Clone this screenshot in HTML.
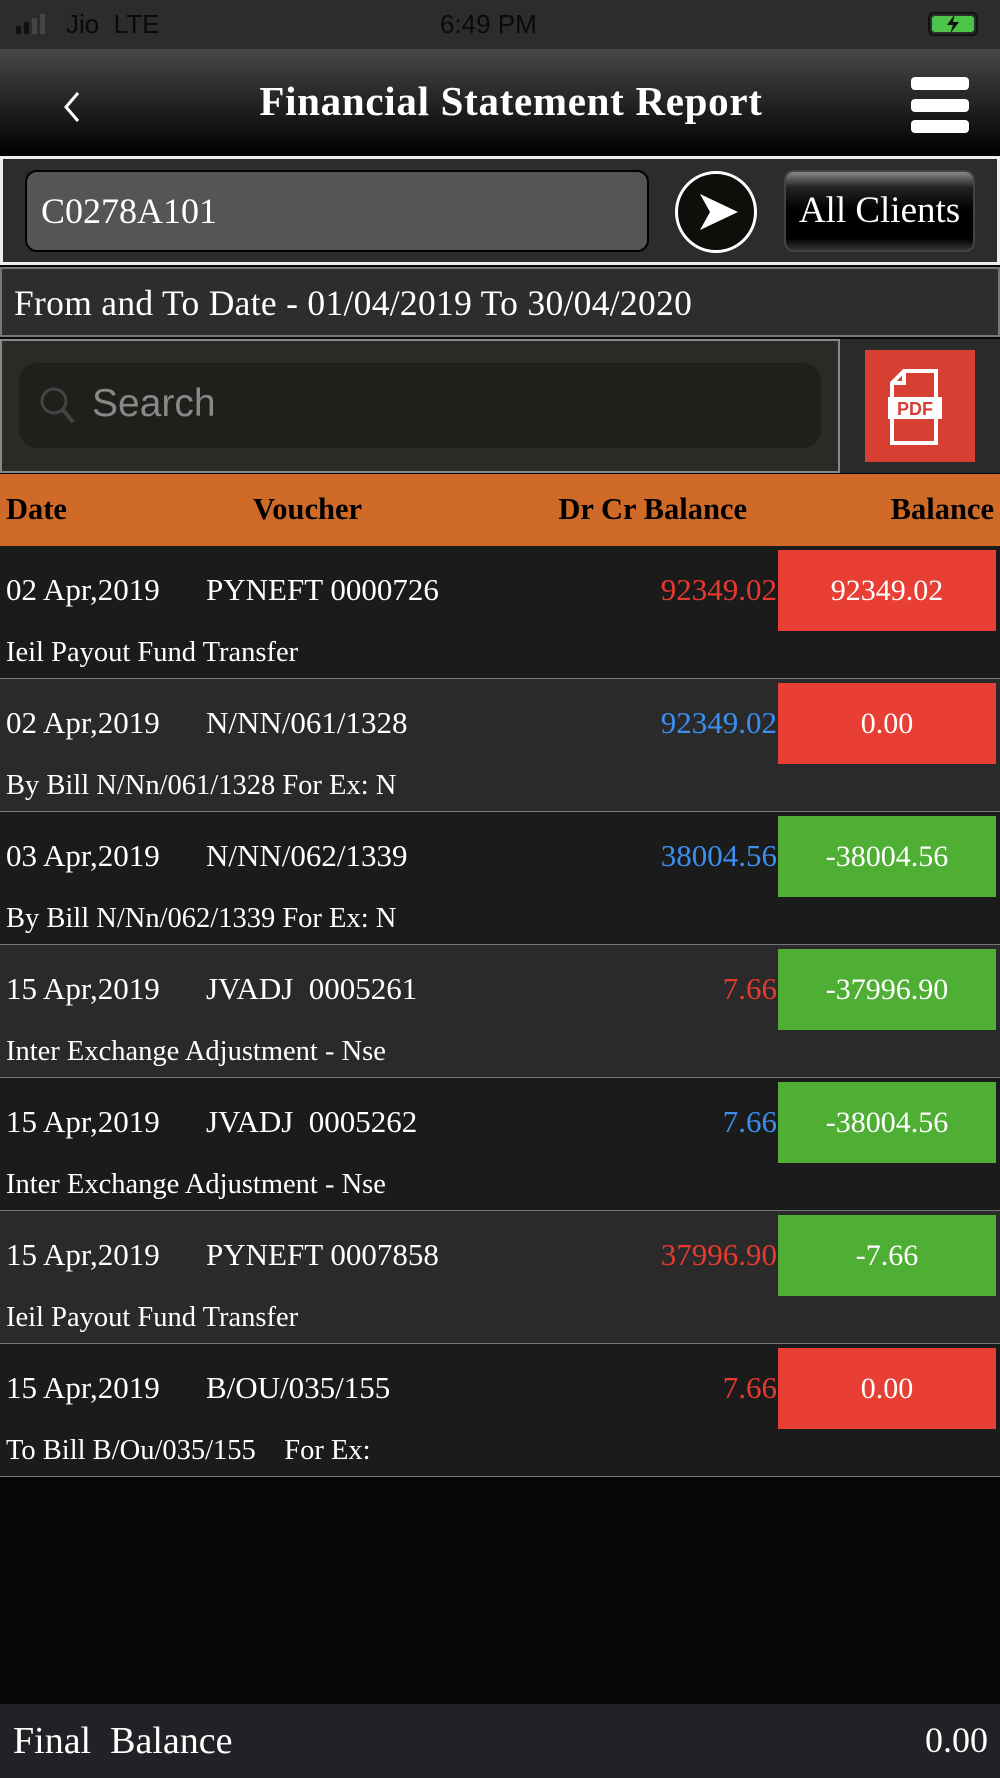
<!DOCTYPE html><html><head><style>
*{margin:0;padding:0;box-sizing:border-box}
body{width:1000px;height:1778px;background:#070707;font-family:"Liberation Serif",serif;color:#fff;position:relative;overflow:hidden}
.a{position:absolute}
.row{position:absolute;left:0;width:1000px;height:133px;border-bottom:1px solid #777}
.row .d{position:absolute;left:6px;top:26px;font-size:31px}
.row .v{position:absolute;left:206px;top:26px;font-size:31px;white-space:pre}
.row .c{position:absolute;right:223px;top:26px;font-size:31px}
.row .b{position:absolute;left:778px;top:4px;width:218px;height:81px;font-size:30px;text-align:center;line-height:81px}
.row .s{position:absolute;left:6px;top:91px;font-size:28.5px;white-space:pre}
.R{background:#e83e33}.G{background:#4faf35}
</style></head><body>
<div class="a" style="left:0;top:0;width:1000px;height:49px;background:#2c2c2c"></div>
<div class="a" style="left:16px;top:14px;display:flex;align-items:flex-end;gap:3px">
<div style="width:5px;height:8px;background:#111"></div><div style="width:5px;height:12px;background:#111"></div><div style="width:5px;height:16px;background:#444"></div><div style="width:5px;height:20px;background:#444"></div></div>
<div class="a" style="left:66px;top:9px;font:26px 'Liberation Sans',sans-serif;color:#0a0a0a">Jio&nbsp; LTE</div>
<div class="a" style="left:440px;top:9px;font:26px 'Liberation Sans',sans-serif;color:#0a0a0a">6:49 PM</div>
<div class="a" style="left:928px;top:12px;width:50px;height:24px;border:2px solid #111;border-radius:6px;padding:2px"><div style="width:100%;height:100%;background:#4cc44a;border-radius:3px"></div></div>
<svg class="a" style="left:942px;top:13px" width="22" height="22"><path d="M13 1 L5 12 H11 L8 21 L17 9 H11 Z" fill="#111"/></svg>
<div class="a" style="left:0;top:49px;width:1000px;height:107px;background:linear-gradient(#474747,#000)"></div>
<svg class="a" style="left:60px;top:90px" width="24" height="34"><path d="M18 3 L6 17 L18 31" stroke="#fff" stroke-width="3" fill="none"/></svg>
<div class="a" style="left:0;width:1022px;top:77px;text-align:center;font-weight:bold;font-size:41px;letter-spacing:0.7px">Financial Statement Report</div>
<div class="a" style="left:911px;top:77px;width:58px;height:13px;background:#fff;border-radius:4px"></div>
<div class="a" style="left:911px;top:99px;width:58px;height:13px;background:#fff;border-radius:4px"></div>
<div class="a" style="left:911px;top:120px;width:58px;height:13px;background:#fff;border-radius:4px"></div>
<div class="a" style="left:0;top:156px;width:1000px;height:3px;background:#eee"></div>
<div class="a" style="left:0;top:159px;width:1000px;height:106px;background:#2c2c2c;border:3px solid #eee;border-top:0"></div>
<div class="a" style="left:25px;top:170px;width:624px;height:82px;background:#555;border:2px solid #000;border-radius:12px;font-size:36px;padding:18px 14px">C0278A101</div>
<div class="a" style="left:675px;top:171px;width:82px;height:82px;border-radius:50%;background:#0e0e0a;border:3px solid #fff"></div>
<svg class="a" style="left:698px;top:192px" width="42" height="40"><path d="M2 2 L40 20 L2 38 L12 20 Z" fill="#fff"/></svg>
<div class="a" style="left:784px;top:170px;width:191px;height:82px;border-radius:10px;border:2px solid #444;background:linear-gradient(#888 0%,#222 20%,#000 50%,#000 85%,#333);font-size:37px;text-align:center;line-height:78px;white-space:nowrap">All Clients</div>
<div class="a" style="left:0;top:267px;width:1000px;height:70px;background:#2d2d2d;border:2px solid #777"></div>
<div class="a" style="left:14px;top:282px;font-size:35.5px;letter-spacing:0.3px">From and To Date - 01/04/2019 To 30/04/2020</div>
<div class="a" style="left:0;top:339px;width:840px;height:134px;background:#2a2a26;border:2px solid #888"></div>
<div class="a" style="left:840px;top:339px;width:160px;height:134px;background:#2a2a2a"></div>
<div class="a" style="left:19px;top:363px;width:802px;height:85px;background:#1f1f1c;border-radius:18px"></div>
<svg class="a" style="left:38px;top:385px" width="40" height="42"><circle cx="16" cy="16" r="12" stroke="#444" stroke-width="3" fill="none"/><path d="M25 25 L35 37" stroke="#444" stroke-width="4"/></svg>
<div class="a" style="left:92px;top:382px;font:39px 'Liberation Sans',sans-serif;color:#888">Search</div>
<div class="a" style="left:865px;top:350px;width:110px;height:112px;background:#d63f31"></div>
<svg class="a" style="left:888px;top:367px" width="64" height="80"><path d="M16 4 H48 V76 H4 V16 Z M4 16 H16 V4" stroke="#fff" stroke-width="4" fill="none"/><rect x="0" y="30" width="54" height="22" fill="#fff"/><text x="27" y="48" font-family="Liberation Sans" font-weight="bold" font-size="18" fill="#d63f31" text-anchor="middle">PDF</text></svg>
<div class="a" style="left:0;top:474px;width:1000px;height:72px;background:#d06a28;color:#000;font-weight:bold;font-size:30.5px">
<span class="a" style="left:6px;top:18px">Date</span><span class="a" style="left:253px;top:18px">Voucher</span><span class="a" style="right:253px;top:18px;white-space:nowrap">Dr Cr Balance</span><span class="a" style="right:6px;top:18px">Balance</span></div>
<div class="row" style="top:546px;background:#1b1b1b"><span class="d">02 Apr,2019</span><span class="v">PYNEFT 0000726</span><span class="c" style="color:#e63a2e">92349.02</span><div class="b R">92349.02</div><span class="s">Ieil Payout Fund Transfer</span></div>
<div class="row" style="top:679px;background:#2a2a2a"><span class="d">02 Apr,2019</span><span class="v">N/NN/061/1328</span><span class="c" style="color:#3b8ff0">92349.02</span><div class="b R">0.00</div><span class="s">By Bill N/Nn/061/1328 For Ex: N</span></div>
<div class="row" style="top:812px;background:#1b1b1b"><span class="d">03 Apr,2019</span><span class="v">N/NN/062/1339</span><span class="c" style="color:#3b8ff0">38004.56</span><div class="b G">-38004.56</div><span class="s">By Bill N/Nn/062/1339 For Ex: N</span></div>
<div class="row" style="top:945px;background:#2a2a2a"><span class="d">15 Apr,2019</span><span class="v">JVADJ  0005261</span><span class="c" style="color:#e63a2e">7.66</span><div class="b G">-37996.90</div><span class="s">Inter Exchange Adjustment - Nse</span></div>
<div class="row" style="top:1078px;background:#1b1b1b"><span class="d">15 Apr,2019</span><span class="v">JVADJ  0005262</span><span class="c" style="color:#3b8ff0">7.66</span><div class="b G">-38004.56</div><span class="s">Inter Exchange Adjustment - Nse</span></div>
<div class="row" style="top:1211px;background:#2a2a2a"><span class="d">15 Apr,2019</span><span class="v">PYNEFT 0007858</span><span class="c" style="color:#e63a2e">37996.90</span><div class="b G">-7.66</div><span class="s">Ieil Payout Fund Transfer</span></div>
<div class="row" style="top:1344px;background:#1b1b1b"><span class="d">15 Apr,2019</span><span class="v">B/OU/035/155</span><span class="c" style="color:#e63a2e">7.66</span><div class="b R">0.00</div><span class="s">To Bill B/Ou/035/155    For Ex:</span></div>
<div class="a" style="left:0;top:1704px;width:1000px;height:74px;background:#222226"></div>
<div class="a" style="left:13px;top:1719px;font-size:38px;white-space:pre">Final  Balance</div>
<div class="a" style="right:12px;top:1719px;font-size:36px">0.00</div>
</body></html>
